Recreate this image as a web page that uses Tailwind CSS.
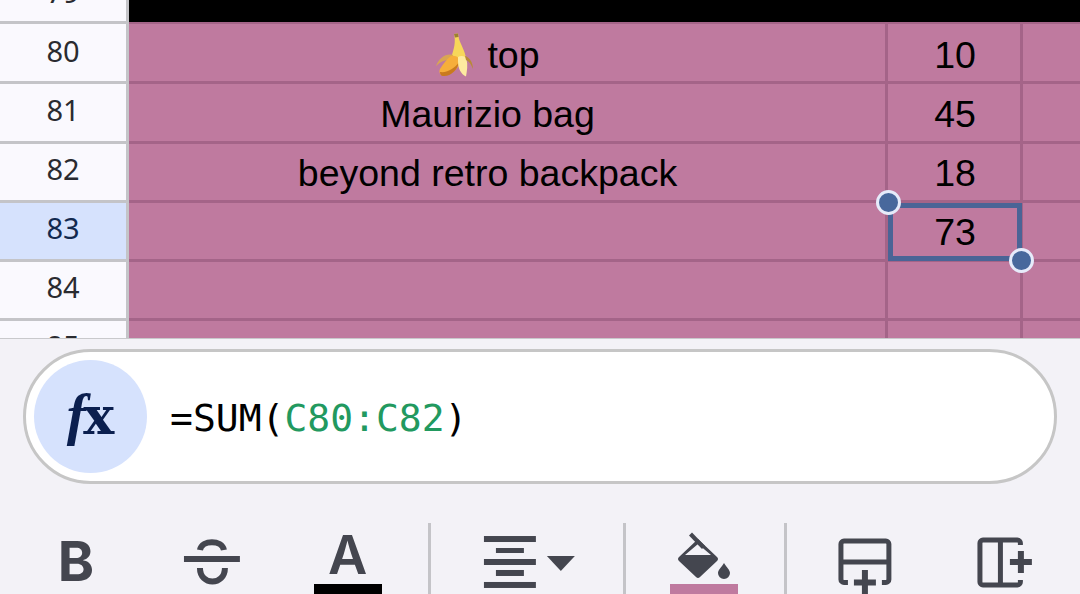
<!DOCTYPE html>
<html lang="en">
<head>
  <meta charset="UTF-8" />
  <title>Spreadsheet formula bar</title>
  <script src="https://cdn.jsdelivr.net/npm/@tailwindcss/browser@4"></script>
</head>
<body class="w-[1080px] h-[594px] overflow-hidden bg-[#f3f2f7]">

  <!-- Sheet -->
  <div class="h-[339px] overflow-hidden border-b border-[#c9c9cc]">
    <div class="-mt-[35px]">

      <div class="flex h-[59px]">
        <div class="w-[129px] pb-[2px] flex items-center justify-center bg-[#faf9fe] border-r-[3px] border-b-[3px] border-[#c4c4c8] font-['Noto_Sans'] text-[29px] text-[#2a2b30]">79</div>
        <div class="flex-1 bg-black border-b-[2px] border-[#a46488]"></div>
      </div>

      <div class="flex h-[60px]">
        <div class="w-[129px] pb-[3px] flex items-center justify-center bg-[#faf9fe] border-r-[3px] border-b-[3px] border-[#c4c4c8] font-['Noto_Sans'] text-[29px] text-[#2a2b30]">80</div>
        <div class="flex-1 flex bg-[#bf7a9f] border-b-[3px] border-[#a46488] font-['Liberation_Sans'] text-[37.5px] text-black">
          <div class="w-[759px] pt-[5px] flex items-center justify-center gap-[14px] pr-[39px] border-r-[3px] border-[#a46488]">
            <svg class="w-[38px] h-[44px]" viewBox="437 34 38 44">
              <path d="M456 35 L460 34.500 L461 40 C463 46 467 52 468 59 L453 59 C456 50 458 43 456 35 Z" fill="#f7d75a"/>
              <path d="M456 35 L460 34.500 L460.500 38 L457 38.500 Z" fill="#9c7f33"/>
              <path d="M455 56 C448 54 441 59 438 67 C443 62 449 60 454 61 Z" fill="#d9a552"/>
              <path d="M453 57 C458 56 463 59 462 64 C459 71 452 77 445 76.500 C441 76 441 72 442 70 C445 65 449 60 453 57 Z" fill="#f6ae3a"/>
              <path d="M442 73 C450 74 457 69 461 63 C460 71 452 78 445 77 C443 77 442 75 442 73 Z" fill="#c97a1e"/>
              <path d="M460 58 C463 56 468 57 468.500 60 C470 66 469 72 468 77.500 C463 75 460 70 460 62 Z" fill="#fdeaa0"/>
              <path d="M467 57 C471 58 475 63 475 70 C473 65 471 62 468 61 Z" fill="#b98a35"/>
            </svg>
            <span>top</span>
          </div>
          <div class="w-[135px] pt-[5px] pl-[2px] flex items-center justify-center border-r-[3px] border-[#a46488]">10</div>
          <div class="flex-1"></div>
        </div>
      </div>

      <div class="flex h-[60px]">
        <div class="w-[129px] pb-[5px] flex items-center justify-center bg-[#faf9fe] border-r-[3px] border-b-[3px] border-[#c4c4c8] font-['Noto_Sans'] text-[29px] text-[#2a2b30]">81</div>
        <div class="flex-1 flex bg-[#bf7a9f] border-b-[3px] border-[#a46488] font-['Liberation_Sans'] text-[37.5px] text-black">
          <div class="w-[759px] pt-[4px] flex items-center justify-center pr-[39px] border-r-[3px] border-[#a46488]">Maurizio bag</div>
          <div class="w-[135px] pt-[3px] pl-[2px] flex items-center justify-center border-r-[3px] border-[#a46488]">45</div>
          <div class="flex-1"></div>
        </div>
      </div>

      <div class="flex h-[59px]">
        <div class="w-[129px] pb-[6px] flex items-center justify-center bg-[#faf9fe] border-r-[3px] border-b-[3px] border-[#c4c4c8] font-['Noto_Sans'] text-[29px] text-[#2a2b30]">82</div>
        <div class="flex-1 flex bg-[#bf7a9f] border-b-[3px] border-[#a46488] font-['Liberation_Sans'] text-[37.5px] text-black">
          <div class="w-[759px] pt-[3px] flex items-center justify-center pr-[39px] border-r-[3px] border-[#a46488]">beyond retro backpack</div>
          <div class="w-[135px] pt-[2px] pl-[2px] flex items-center justify-center border-r-[3px] border-[#a46488]">18</div>
          <div class="flex-1"></div>
        </div>
      </div>

      <div class="flex h-[59px]">
        <div class="w-[129px] pb-[6px] flex items-center justify-center bg-[#d6e2fd] border-r-[3px] border-b-[3px] border-[#c4c4c8] font-['Noto_Sans'] text-[29px] text-[#12294f]">83</div>
        <div class="flex-1 flex bg-[#bf7a9f] border-b-[3px] border-[#a46488] font-['Liberation_Sans'] text-[37.5px] text-black">
          <div class="w-[759px] border-r-[3px] border-[#a46488]"></div>
          <!-- selected cell -->
          <div class="relative w-[135px] pt-[2px] pl-[2px] flex items-center justify-center border-r-[3px] border-[#a46488]">
            73
            <div class="absolute left-0 top-0 w-[134px] h-[58px] border-[5px] border-[#4a6496]"></div>
            <div class="absolute -left-[12.5px] -top-[13px] w-[25px] h-[25px] rounded-full bg-[#48689c] border-[3px] border-[#e6ebfa]"></div>
            <div class="absolute left-[121px] top-[45px] w-[25px] h-[25px] rounded-full bg-[#48689c] border-[3px] border-[#e6ebfa]"></div>
          </div>
          <div class="flex-1"></div>
        </div>
      </div>

      <div class="flex h-[59px]">
        <div class="w-[129px] pb-[6px] flex items-center justify-center bg-[#faf9fe] border-r-[3px] border-b-[3px] border-[#c4c4c8] font-['Noto_Sans'] text-[29px] text-[#2a2b30]">84</div>
        <div class="flex-1 flex bg-[#bf7a9f] border-b-[3px] border-[#a46488]">
          <div class="w-[759px] border-r-[3px] border-[#a46488]"></div>
          <div class="w-[135px] border-r-[3px] border-[#a46488]"></div>
          <div class="flex-1"></div>
        </div>
      </div>

      <div class="flex h-[59px]">
        <div class="w-[129px] pb-[9px] flex items-center justify-center bg-[#faf9fe] border-r-[3px] border-[#c4c4c8] font-['Noto_Sans'] text-[29px] text-[#2a2b30]">85</div>
        <div class="flex-1 flex bg-[#bf7a9f]">
          <div class="w-[759px] border-r-[3px] border-[#a46488]"></div>
          <div class="w-[135px] border-r-[3px] border-[#a46488]"></div>
          <div class="flex-1"></div>
        </div>
      </div>

    </div>
  </div>

  <!-- Formula bar -->
  <div class="mx-[23px] mt-[10px] w-[1034px] h-[135px] flex items-center pl-[8px] bg-white border-[3px] border-[#c6c6c6] rounded-full">
    <div class="w-[113px] h-[113px] flex items-center justify-center rounded-full bg-[#d6e2fd] text-[#0b1f4f] font-bold leading-none">
      <span class="font-['Liberation_Serif'] italic text-[58px] -mr-[3px] -mt-[4px]">f</span><span class="font-['DejaVu_Serif'] text-[52px] -mt-[1px]">x</span>
    </div>
    <div class="ml-[23px] mt-[3px] font-['DejaVu_Sans_Mono'] text-[38px] text-black">=SUM(<span class="text-[#22995f]">C80:C82</span>)</div>
  </div>

  <!-- Toolbar -->
  <div class="mt-[39px] h-[71px] flex text-[#44464f]">
    <div class="w-[152px] flex justify-center font-['Inter'] font-bold text-[55px] leading-[71px] pt-[3px]">B</div>
    <svg class="w-[120px] h-[71px]" viewBox="152 523 120 71" fill="none" stroke="#44464f" stroke-width="6">
      <path d="M200 550 C202 539.500 222 539.500 224 550"/>
      <path d="M184 559 H240"/>
      <path d="M200 568 C200 586 225 586 225 568"/>
    </svg>
    <div class="w-[152px] flex flex-col items-center justify-end">
      <span class="font-['Inter'] font-semibold text-[54px] leading-[58px]">A</span>
      <div class="w-[68px] h-[10px] bg-black"></div>
    </div>
    <div class="ml-[4px] w-[3px] bg-[#c4c4c8]"></div>

    <svg class="w-[193px] h-[71px]" viewBox="431 523 193 71" fill="#44464f">
      <rect x="484" y="536" width="52" height="6"/>
      <rect x="496" y="548" width="28" height="5"/>
      <rect x="484" y="559" width="52" height="6"/>
      <rect x="496" y="570" width="28" height="6"/>
      <rect x="484" y="582" width="52" height="6"/>
      <path d="M547 556 H575 L561 571 Z"/>
    </svg>
    <div class="w-[3px] bg-[#c4c4c8]"></div>

    <div class="w-[158px] relative flex flex-col items-center justify-end">
      <svg class="w-[158px] h-[61px]" viewBox="626 523 158 61" fill="#44464f">
        <path fill-rule="evenodd" d="M698 539 L717 557 Q719 559 717 561 L700 577 Q698 579 696 577 L679 561 Q677 559 679 557 Z M698 544 L685 555 H711 Z"/>
        <path d="M692 532.500 L705 546 L702 549 L689 535.500 Z"/>
        <path d="M724 563 C727 568 730 570 730 573 A6 6 0 0 1 718 573 C718 570 721 568 724 563 Z"/>
      </svg>
      <div class="w-[68px] h-[10px] bg-[#bf7a9f] -ml-[3px]"></div>
    </div>
    <div class="w-[3px] bg-[#c4c4c8]"></div>

    <svg class="w-[140px] h-[71px]" viewBox="787 523 140 71" fill="none" stroke="#44464f" stroke-width="5">
      <path d="M848 582.500 H844 a3 3 0 0 1 -3 -3 V544 a3 3 0 0 1 3 -3 H886 a3 3 0 0 1 3 3 V579.500 a3 3 0 0 1 -3 3 H882"/>
      <path d="M841 562 H889"/>
      <path d="M854 582.500 H876 M865 570 V594" stroke-width="6"/>
    </svg>
    <svg class="w-[153px] h-[71px]" viewBox="927 523 153 71" fill="none" stroke="#44464f" stroke-width="5">
      <path d="M1020.500 545 v-2 a3 3 0 0 0 -3 -3 H983 a3 3 0 0 0 -3 3 V582 a3 3 0 0 0 3 3 H1017.500 a3 3 0 0 0 3 -3 v-2"/>
      <path d="M1000.500 540 V585"/>
      <path d="M1010 562 H1032 M1021 551 V573" stroke-width="6"/>
    </svg>
  </div>

</body>
</html>
